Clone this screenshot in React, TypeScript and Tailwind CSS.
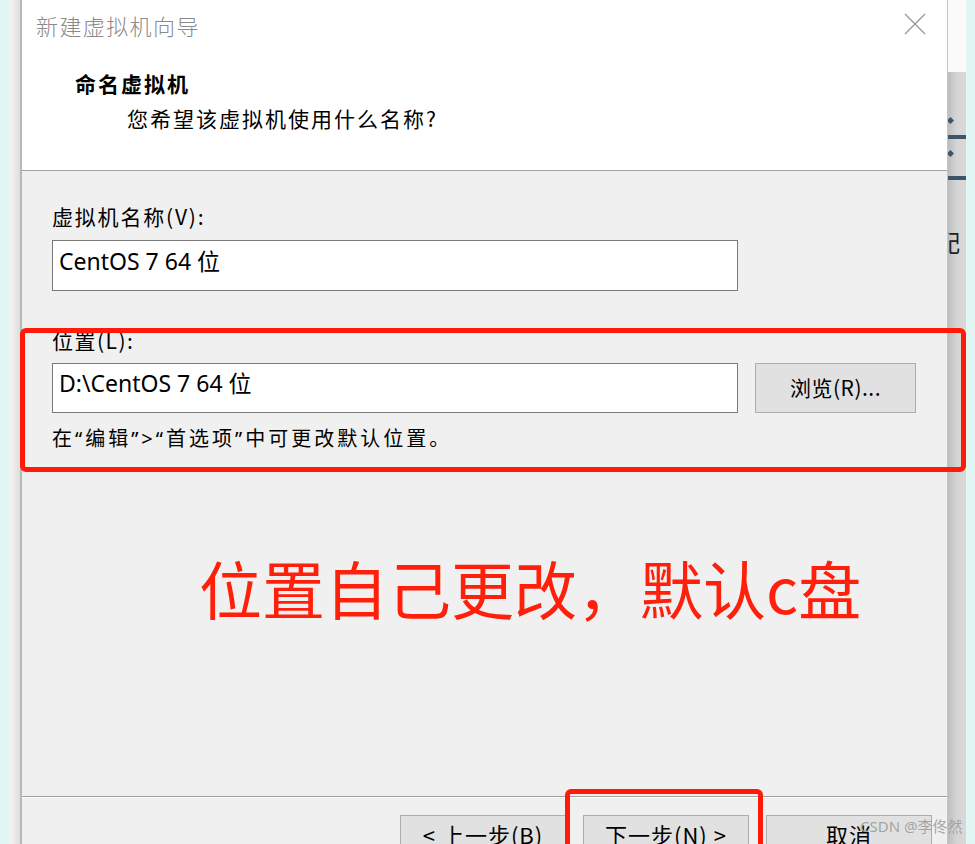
import React from 'react';

const cjk = { fontFamily: '"Noto Sans CJK SC", "Noto Sans", sans-serif' };
const mixed = { fontFamily: '"Noto Sans", "Noto Sans CJK SC", sans-serif' };

const FooterButton: React.FC<{ label: string }> = ({ label }) => (
  <div className="w-[166px] h-[40px] shrink-0 border border-[#adadad] bg-[#e1e1e1] flex justify-center pt-[3px] text-[22px] leading-[30px] text-black tracking-[1px]">
    {label}
  </div>
);

export default function App() {
  return (
    <div className="relative w-[975px] h-[844px] overflow-hidden flex bg-[#e2f6f3]" style={cjk}>
      {/* left backdrop + shadow */}
      <div className="w-[10px] shrink-0 bg-[#e2f6f3]" />
      <div className="w-[10px] shrink-0 bg-gradient-to-r from-[#f4f4f4] to-[#dedede]" />

      {/* dialog */}
      <div className="w-[928px] shrink-0 flex flex-col border-l-2 border-r border-l-[#b8b8b8] border-r-[#c4c4c4] bg-[#f0f0f0]">
        {/* header */}
        <div className="h-[171px] shrink-0 bg-white border-b border-[#a0a0a0] flex flex-col">
          <div className="flex items-start justify-between pl-[14px] pr-[20px] pt-[10px]">
            <span className="text-[22px] leading-[30px] text-[#8a8a8a] tracking-[1.4px] font-light">新建虚拟机向导</span>
            <svg width="24" height="24" viewBox="0 0 24 24" className="mt-[2px]">
              <path d="M2 2 L22 22 M22 2 L2 22" stroke="#9a9a9a" strokeWidth="1.4" fill="none" />
            </svg>
          </div>
          <div className="pl-[53px] mt-[28px] text-[21px] leading-[30px] font-bold text-black tracking-[2px]">命名虚拟机</div>
          <div className="pl-[105px] mt-[5px] text-[21px] leading-[30px] text-black tracking-[2px]">您希望该虚拟机使用什么名称?</div>
        </div>

        {/* body */}
        <div className="flex-1 flex flex-col pl-[30px] border-b border-[#a0a0a0]">
          <div className="mt-[31px] text-[21px] leading-[28px] text-black tracking-[1.8px]">虚拟机名称(V):</div>
          <div className="mt-[10px] w-[686px] h-[51px] bg-white border border-[#7a7a7a] pl-[6px] pt-[5px] text-[23px] leading-[30px] text-black" style={mixed}>
            CentOS 7 64 位
          </div>

          <div className="mt-[35px] text-[21px] leading-[28px] text-black tracking-[1.5px]">位置(L):</div>
          <div className="mt-[9px] flex items-start gap-[17px]">
            <div className="w-[686px] h-[50px] bg-white border border-[#7a7a7a] pl-[6px] pt-[4px] text-[23px] leading-[30px] text-black" style={mixed}>
              D:\CentOS 7 64 位
            </div>
            <div className="w-[161px] h-[50px] bg-[#e1e1e1] border border-[#adadad] flex items-center justify-center text-[21px] text-black tracking-[0.5px]">
              浏览(R)...
            </div>
          </div>
          <div className="mt-[12px] text-[20px] leading-[28px] text-black tracking-[3px]" style={mixed}>
            在“编辑”&gt;“首选项”中可更改默认位置。
          </div>

          <div className="mt-[94px] pl-[147px] text-[63px] leading-[80px] text-[#ff1f0a] whitespace-nowrap">位置自己更改，默认c盘</div>
        </div>

        {/* footer */}
        <div className="h-[47px] shrink-0 border-t border-white flex justify-end gap-[17px] pr-[15px] pt-[17px]">
          <FooterButton label="< 上一步(B)" />
          <FooterButton label="下一步(N) >" />
          <FooterButton label="取消" />
        </div>
      </div>

      {/* window behind on the right */}
      <div className="w-[18px] shrink-0 flex flex-col bg-gradient-to-r from-[#bdbdbd] via-[#d6d6d6] to-[#d8d8d8] overflow-hidden">
        <div className="h-[72px] shrink-0 bg-[#fafafa]" />
        <div className="mt-[46px] w-[5px] h-[5px] bg-[#3d5566] rotate-45" />
        <div className="mt-[12px] h-[4px] bg-[#3d5566]" />
        <div className="mt-[12px] w-[5px] h-[5px] bg-[#3d5566] rotate-45" />
        <div className="mt-[20px] h-[4px] bg-[#3d5566]" />
        <div className="mt-[48px] -ml-[12px] text-[24px] leading-[28px] text-[#222]">配</div>
      </div>
      <div className="flex-1 bg-[#e2f6f3]" />

      {/* annotation boxes */}
      <div className="absolute left-[20px] top-[328px] w-[946px] h-[144px] border-[5px] border-[#ff1a0a] rounded-[6px] pointer-events-none" />
      <div className="absolute left-[565px] top-[789px] w-[198px] h-[70px] border-[5px] border-[#ff1a0a] rounded-[6px] pointer-events-none" />

      {/* watermark */}
      <div className="absolute left-[860px] top-[816px] text-[15px] leading-[20px] text-[#9c9c9c]/90 whitespace-nowrap" style={mixed}>
        CSDN @李佟然
      </div>
    </div>
  );
}
